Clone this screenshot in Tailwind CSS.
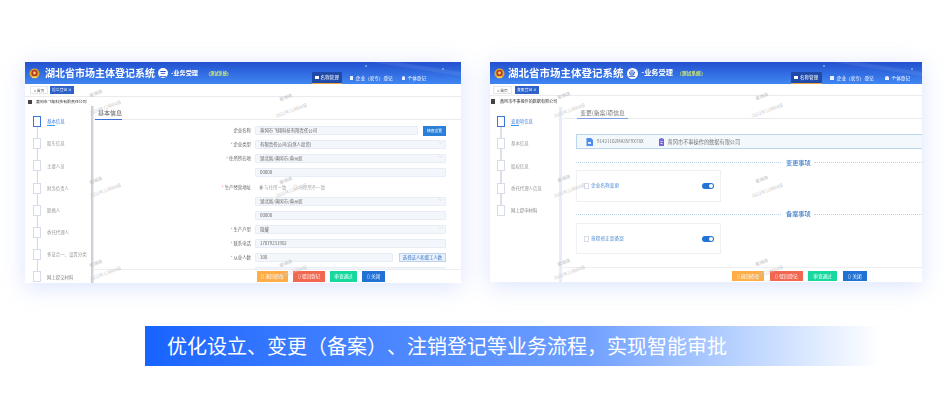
<!DOCTYPE html>
<html lang="en">

<head>
    <meta charset="UTF-8">
    <title>市场主体登记系统</title>
    <script src="https://cdn.jsdelivr.net/npm/@tailwindcss/browser@4"></script>
</head>

<body class="bg-white w-[950px] h-[420px] overflow-hidden [text-spacing-trim:space-all] font-['Noto_Sans_CJK_SC','Liberation_Sans',sans-serif]">
    <div class="flex pt-[62px] pl-[25px] gap-[29px] items-start">

        <!-- Left window Start -->
        <div class="relative w-[436px] h-[221px] bg-white overflow-hidden shadow-[0_4px_22px_rgba(90,130,250,0.22)]">
            <div class="flex flex-col h-full blur-[0.45px]">
                <!-- Header -->
                <header class="relative h-[22px] shrink-0 flex items-center bg-gradient-to-b from-[#2450cf] to-[#4186f2] text-white overflow-hidden">
                    <svg class="absolute right-0 top-0" width="130" height="22" viewBox="0 0 130 22">
                        <path d="M40 0 L130 14 L130 10 L66 0 Z" fill="#ffffff" opacity="0.08" />
                        <circle cx="35" cy="4" r="0.8" fill="#cfe0ff" />
                        <circle cx="112" cy="7" r="0.8" fill="#cfe0ff" />
                    </svg>
                    <svg class="ml-[4px] shrink-0" width="11" height="11" viewBox="0 0 11 11">
                        <circle cx="5.5" cy="5.5" r="5" fill="#e0a92c" />
                        <circle cx="5.5" cy="5" r="3.2" fill="#b23a2a" />
                        <circle cx="5.5" cy="5" r="1.4" fill="#f4d35e" />
                        <rect x="3" y="8.6" width="5" height="1.4" fill="#f4d35e" />
                    </svg>
                    <span class="ml-[5px] text-[10px] leading-none font-bold whitespace-nowrap">湖北省市场主体登记系统</span>
                    <span class="ml-[3px] w-[10px] h-[10px] rounded-full bg-white text-[#2450cf] text-[7px] leading-[10px] text-center font-bold">三</span>
                    <span class="ml-[3px] text-[6.2px] leading-none font-bold whitespace-nowrap">-业务受理</span>
                    <span class="ml-[8px] text-[4.2px] leading-none font-bold text-[#d8f06a] whitespace-nowrap">（测试系统）</span>
                    <div class="relative ml-auto pr-[35px] h-full flex items-end">
                        <div class="w-[30px] h-[12px] flex items-center justify-center gap-[1.5px] bg-[#1f4aa8] border-b border-[#e8a33d] text-[4.6px] rounded-t-[1px]">
                            <span class="w-[4px] h-[3px] bg-white"></span><span>名称管理</span>
                        </div>
                        <div class="h-[12px] ml-[8px] flex items-center gap-[3px] text-[4.6px] whitespace-nowrap">
                            <span class="w-[3px] h-[4px] bg-[#e8f0ff]"></span><span>企业（农专）登记</span>
                        </div>
                        <div class="h-[12px] ml-[9px] flex items-center gap-[3px] text-[4.6px] whitespace-nowrap">
                            <span class="w-[3px] h-[4px] bg-[#e8f0ff] rounded-t-full"></span><span>个体登记</span>
                        </div>
                    </div>
                </header>
                <!-- Toolbar -->
                <div class="h-[13px] shrink-0 flex items-center gap-[2px] pl-[5px] border-b border-[#e9ebef]">
                    <span class="w-[18px] h-[8px] border border-[#e5e7eb] text-[3.8px] leading-[7px] text-center text-[#555]">⌂ 首页</span>
                    <span class="w-[24px] h-[8px] bg-[#2c62c9] text-white text-[3.8px] leading-[8px] text-center">设立登记 ×</span>
                </div>
                <!-- Company -->
                <div class="h-[9px] shrink-0 flex items-center pl-[3px] gap-[4px] text-[3.9px] text-[#333] whitespace-nowrap">
                    <span class="w-[4px] h-[4px] bg-[#444]"></span><span>黄冈市飞翔科技有限责任公司</span>
                </div>
                <div class="flex flex-1 min-h-0">
                    <!-- Steps -->
                    <aside class="w-[66px] shrink-0 pt-[10px] pl-[8px]">
                        <div class="flex items-center gap-[6px] text-[#3f7fe0] text-[4.4px] leading-none relative"><span class="w-[8px] h-[11px] border-[1.5px] border-[#3b76e0] bg-white shrink-0"></span><span>基本信息</span><span class="absolute left-[14px] top-[9px] w-[8px] h-px bg-[#3b9bf0]"></span></div>
                        <div class="ml-[3.5px] w-px h-[11.2px] bg-[#d5d7dc]"></div>
                        <div class="flex items-center gap-[6px] text-[#999] text-[4.4px] leading-none"><span class="w-[8px] h-[11px] border-[1.5px] border-[#d7dcea] bg-white shrink-0"></span><span>股东信息</span></div>
                        <div class="ml-[3.5px] w-px h-[11.2px] bg-[#d5d7dc]"></div>
                        <div class="flex items-center gap-[6px] text-[#999] text-[4.4px] leading-none"><span class="w-[8px] h-[11px] border-[1.5px] border-[#d7dcea] bg-white shrink-0"></span><span>主要人员</span></div>
                        <div class="ml-[3.5px] w-px h-[11.2px] bg-[#d5d7dc]"></div>
                        <div class="flex items-center gap-[6px] text-[#999] text-[4.4px] leading-none"><span class="w-[8px] h-[11px] border-[1.5px] border-[#d7dcea] bg-white shrink-0"></span><span>财务负责人</span></div>
                        <div class="ml-[3.5px] w-px h-[11.2px] bg-[#d5d7dc]"></div>
                        <div class="flex items-center gap-[6px] text-[#999] text-[4.4px] leading-none"><span class="w-[8px] h-[11px] border-[1.5px] border-[#d7dcea] bg-white shrink-0"></span><span>联络人</span></div>
                        <div class="ml-[3.5px] w-px h-[11.2px] bg-[#d5d7dc]"></div>
                        <div class="flex items-center gap-[6px] text-[#999] text-[4.4px] leading-none"><span class="w-[8px] h-[11px] border-[1.5px] border-[#d7dcea] bg-white shrink-0"></span><span>委托代理人</span></div>
                        <div class="ml-[3.5px] w-px h-[11.2px] bg-[#d5d7dc]"></div>
                        <div class="flex items-center gap-[6px] text-[#999] text-[4.4px] leading-none whitespace-nowrap"><span class="w-[8px] h-[11px] border-[1.5px] border-[#d7dcea] bg-white shrink-0"></span><span>多证合一、设置分类</span></div>
                        <div class="ml-[3.5px] w-px h-[11.2px] bg-[#d5d7dc]"></div>
                        <div class="flex items-center gap-[6px] text-[#888] text-[4.4px] leading-none"><span class="w-[8px] h-[11px] border-[1.5px] border-[#d7dcea] bg-white shrink-0"></span><span>网上提交材料</span></div>
                    </aside>
                    <div class="w-[3px] shrink-0 bg-gradient-to-r from-[#c3c6cd] via-[#d4d7de] to-[#eef1fa]"></div>
                    <!-- Main -->
                    <main class="flex-1 min-w-0 flex flex-col">
                        <div class="h-[14px] shrink-0 flex border-b border-[#e9ebef] pl-px">
                            <span class="h-[14px] w-[27px] pl-[3px] text-[6px] leading-[14px] text-[#555] whitespace-nowrap border-b border-[#3b6fd8]">基本信息</span>
                        </div>
                        <div class="flex-1 min-h-0 overflow-hidden pt-[6px] flex flex-col gap-[5px] text-[4.4px] text-[#666]">
                            <div class="h-[9px] shrink-0 flex items-center"><span class="w-[158px] text-right pr-[1px]">企业名称</span><span class="ml-[3px] w-[163px] h-[9px] rounded-[1px] bg-[#f3f6fb] border border-[#e7edf6] pl-[4px] leading-[7px]">黄冈市飞翔科技有限责任公司</span><span class="ml-[5px] w-[23px] h-[10px] bg-[#2a80d8] text-white text-center leading-[10px] text-[3.8px]">核查重置</span></div>
                            <div class="h-[9px] shrink-0 flex items-center"><span class="w-[158px] text-right pr-[1px]"><span class="text-[#f08080]">* </span>企业类型</span><span class="ml-[3px] w-[191px] h-[9px] rounded-[1px] bg-[#f3f6fb] border border-[#e7edf6] pl-[4px] pr-[2px] leading-[7px] flex justify-between"><span>有限责任公司(自然人投资)</span><span class="text-[#c5ccd8]">﹀</span></span></div>
                            <div class="h-[9px] shrink-0 flex items-center"><span class="w-[158px] text-right pr-[1px]"><span class="text-[#f08080]">* </span>住所所在地</span><span class="ml-[3px] w-[191px] h-[9px] rounded-[1px] bg-[#f3f6fb] border border-[#e7edf6] pl-[4px] pr-[2px] leading-[7px] flex justify-between"><span>湖北省/黄冈市/黄州区</span><span class="text-[#c5ccd8]">﹀</span></span></div>
                            <div class="h-[9px] shrink-0 flex items-center"><span class="w-[158px]"></span><span class="ml-[3px] w-[191px] h-[9px] rounded-[1px] bg-[#f3f6fb] border border-[#e7edf6] pl-[4px] leading-[7px]">00000</span></div>
                            <div class="h-[10px] shrink-0 flex items-center"><span class="w-[158px] text-right pr-[1px]"><span class="text-[#f08080]">* </span>生产经营地址</span><span class="ml-[7px] text-[#aaa] whitespace-nowrap">◉ 与住所一致</span><span class="ml-[7px] text-[#aaa] whitespace-nowrap">○ 与住所不一致</span></div>
                            <div class="h-[9px] shrink-0 flex items-center"><span class="w-[158px]"></span><span class="ml-[3px] w-[191px] h-[9px] rounded-[1px] bg-[#f3f6fb] border border-[#e7edf6] pl-[4px] pr-[2px] leading-[7px] flex justify-between"><span>湖北省/黄冈市/黄州区</span><span class="text-[#c5ccd8]">﹀</span></span></div>
                            <div class="h-[9px] shrink-0 flex items-center"><span class="w-[158px]"></span><span class="ml-[3px] w-[191px] h-[9px] rounded-[1px] bg-[#f3f6fb] border border-[#e7edf6] pl-[4px] leading-[7px]">00000</span></div>
                            <div class="h-[9px] shrink-0 flex items-center"><span class="w-[158px] text-right pr-[1px]"><span class="text-[#f08080]">* </span>生产户型</span><span class="ml-[3px] w-[191px] h-[9px] rounded-[1px] bg-[#f3f6fb] border border-[#e7edf6] pl-[4px] pr-[2px] leading-[7px] flex justify-between"><span>隐藏</span><span class="text-[#c5ccd8]">﹀</span></span></div>
                            <div class="h-[9px] shrink-0 flex items-center"><span class="w-[158px] text-right pr-[1px]"><span class="text-[#f08080]">* </span>联系电话</span><span class="ml-[3px] w-[191px] h-[9px] rounded-[1px] bg-[#f3f6fb] border border-[#e7edf6] pl-[4px] leading-[7px]">17879231902</span></div>
                            <div class="h-[9px] shrink-0 flex items-center"><span class="w-[158px] text-right pr-[1px]"><span class="text-[#f08080]">* </span>从业人数</span><span class="ml-[3px] w-[138px] h-[9px] rounded-[1px] bg-[#f3f6fb] border border-[#e7edf6] pl-[4px] leading-[7px]">300</span><span class="ml-[6px] w-[47px] h-[9px] bg-[#e8f1fc] border border-[#bcd3f0] text-[#3b72c4] text-center leading-[7px] whitespace-nowrap">选择法人和董工人数</span></div>
                            <div class="h-[9px] shrink-0 flex items-center"><span class="w-[158px]"></span><span class="ml-[3px] w-[191px] h-[9px] rounded-[1px] bg-[#f3f6fb] border border-[#e7edf6]"></span></div>
                        </div>
                        <!-- Footer buttons -->
                        <div class="h-[14px] shrink-0 border-t border-[#eceef2] pl-[163px] pt-[1px] flex gap-[5px] text-white text-[4.6px] leading-[11px] text-center">
                            <span class="w-[31px] h-[11px] bg-[#ffad47]">▯ 退回修改</span>
                            <span class="w-[32px] h-[11px] bg-[#f2674f]">▯ 驳回登记</span>
                            <span class="w-[27px] h-[11px] bg-[#17d9a0]">审查通过</span>
                            <span class="w-[23px] h-[11px] bg-[#2272d6]">▯ 关闭</span>
                        </div>
                    </main>
                </div>
            </div>
            <!-- Watermarks -->
            <div class="absolute left-[64px] top-[29px] -rotate-[20deg] text-[4.4px] leading-none text-[#bdbdbd] whitespace-nowrap">曾琪琪</div>
            <div class="absolute left-[64px] top-[43px] -rotate-[20deg] text-[4.4px] leading-none text-[#c8c8c8] whitespace-nowrap">2022年12月04日</div>
            <div class="absolute left-[64px] top-[116px] -rotate-[20deg] text-[4.4px] leading-none text-[#bdbdbd] whitespace-nowrap">曾琪琪</div>
            <div class="absolute left-[64px] top-[126px] -rotate-[20deg] text-[4.4px] leading-none text-[#c8c8c8] whitespace-nowrap">2022年12月04日</div>
            <div class="absolute left-[64px] top-[199px] -rotate-[20deg] text-[4.4px] leading-none text-[#bdbdbd] whitespace-nowrap">曾琪琪</div>
            <div class="absolute left-[64px] top-[209px] -rotate-[20deg] text-[4.4px] leading-none text-[#c8c8c8] whitespace-nowrap">2022年12月04日</div>
            <div class="absolute left-[254px] top-[33px] -rotate-[20deg] text-[4.4px] leading-none text-[#bdbdbd] whitespace-nowrap">曾琪琪</div>
            <div class="absolute left-[250px] top-[46px] -rotate-[20deg] text-[4.4px] leading-none text-[#c8c8c8] whitespace-nowrap">2022年12月04日</div>
            <div class="absolute left-[254px] top-[116px] -rotate-[20deg] text-[4.4px] leading-none text-[#bdbdbd] whitespace-nowrap">曾琪琪</div>
            <div class="absolute left-[250px] top-[126px] -rotate-[20deg] text-[4.4px] leading-none text-[#c8c8c8] whitespace-nowrap">2022年12月04日</div>
            <div class="absolute left-[254px] top-[199px] -rotate-[20deg] text-[4.4px] leading-none text-[#bdbdbd] whitespace-nowrap">曾琪琪</div>
            <div class="absolute left-[250px] top-[208px] -rotate-[20deg] text-[4.4px] leading-none text-[#c8c8c8] whitespace-nowrap">2022年12月04日</div>
        </div>
        <!-- Left window End -->

        <!-- Right window Start -->
        <div class="relative w-[432px] h-[220px] bg-white overflow-hidden shadow-[0_4px_22px_rgba(90,130,250,0.22)]">
            <div class="flex flex-col h-full blur-[0.45px]">
                <!-- Header -->
                <header class="relative h-[22px] shrink-0 flex items-center bg-gradient-to-b from-[#2450cf] to-[#4186f2] text-white overflow-hidden">
                    <svg class="absolute right-0 top-0" width="130" height="22" viewBox="0 0 130 22">
                        <path d="M40 0 L130 14 L130 10 L66 0 Z" fill="#ffffff" opacity="0.08" />
                        <circle cx="32" cy="4" r="0.8" fill="#cfe0ff" />
                        <circle cx="120" cy="7" r="0.8" fill="#cfe0ff" />
                    </svg>
                    <svg class="ml-[4px] shrink-0" width="11" height="11" viewBox="0 0 11 11">
                        <circle cx="5.5" cy="5.5" r="5" fill="#e0a92c" />
                        <circle cx="5.5" cy="5" r="3.2" fill="#b23a2a" />
                        <circle cx="5.5" cy="5" r="1.4" fill="#f4d35e" />
                        <rect x="3" y="8.6" width="5" height="1.4" fill="#f4d35e" />
                    </svg>
                    <span class="ml-[3px] text-[10.5px] leading-none font-bold whitespace-nowrap">湖北省市场主体登记系统</span>
                    <span class="ml-[3px] w-[11px] h-[11px] rounded-full bg-white text-[#2450cf] text-[7px] leading-[11px] text-center font-bold">业</span>
                    <span class="ml-[4px] text-[7.2px] leading-none font-bold whitespace-nowrap">-业务受理</span>
                    <span class="ml-[4px] text-[4.8px] leading-none font-bold text-[#d8f06a] whitespace-nowrap">（测试系统）</span>
                    <div class="relative ml-auto pr-[12px] h-full flex items-end">
                        <div class="w-[31px] h-[12px] flex items-center justify-center gap-[1.5px] bg-[#1f4aa8] border-b border-[#e8a33d] text-[4.6px] rounded-t-[1px]">
                            <span class="w-[4px] h-[3px] bg-white"></span><span>名称管理</span>
                        </div>
                        <div class="h-[12px] ml-[8px] flex items-center gap-[3px] text-[4.6px] whitespace-nowrap">
                            <span class="w-[4px] h-[4px] bg-[#e8f0ff]"></span><span>企业（农专）登记</span>
                        </div>
                        <div class="h-[12px] ml-[11px] flex items-center gap-[3px] text-[4.6px] whitespace-nowrap">
                            <span class="w-[4px] h-[4px] bg-[#e8f0ff] rounded-t-full"></span><span>个体登记</span>
                        </div>
                    </div>
                </header>
                <!-- Toolbar -->
                <div class="h-[12px] shrink-0 flex items-center gap-[3px] pl-[3px] border-b border-[#e9ebef]">
                    <span class="w-[19px] h-[8px] border border-[#e5e7eb] text-[3.8px] leading-[7px] text-center text-[#555]">⌂ 首页</span>
                    <span class="w-[24px] h-[8px] bg-[#2c62c9] text-white text-[3.8px] leading-[8px] text-center">变更登记 ×</span>
                </div>
                <!-- Company -->
                <div class="h-[11px] shrink-0 flex items-center pl-[1px] gap-[5px] text-[4.1px] text-[#333] whitespace-nowrap">
                    <span class="w-[4px] h-[5px] bg-[#444]"></span><span>黄冈市不事操作的数据有限公司</span>
                </div>
                <div class="flex flex-1 min-h-0">
                    <!-- Steps -->
                    <aside class="w-[69px] shrink-0 pt-[9px] pl-[7px]">
                        <div class="flex items-center gap-[6px] text-[#3f7fe0] text-[4.4px] leading-none relative"><span class="w-[8px] h-[11px] border-[1.5px] border-[#3b76e0] bg-white shrink-0"></span><span>变更项信息</span><span class="absolute left-[14px] top-[9px] w-[8px] h-px bg-[#3b9bf0]"></span></div>
                        <div class="ml-[3px] w-[1.5px] h-[11.2px] bg-[#dde0e6]"></div>
                        <div class="flex items-center gap-[6px] text-[#999] text-[4.4px] leading-none"><span class="w-[8px] h-[11px] border-[1.5px] border-[#d7dcea] bg-white shrink-0"></span><span>基本信息</span></div>
                        <div class="ml-[3px] w-[1.5px] h-[11.2px] bg-[#dde0e6]"></div>
                        <div class="flex items-center gap-[6px] text-[#999] text-[4.4px] leading-none"><span class="w-[8px] h-[11px] border-[1.5px] border-[#d7dcea] bg-white shrink-0"></span><span>股权信息</span></div>
                        <div class="ml-[3px] w-[1.5px] h-[11.2px] bg-[#dde0e6]"></div>
                        <div class="flex items-center gap-[6px] text-[#999] text-[4.4px] leading-none"><span class="w-[8px] h-[11px] border-[1.5px] border-[#d7dcea] bg-white shrink-0"></span><span>委托代理人信息</span></div>
                        <div class="ml-[3px] w-[1.5px] h-[11.2px] bg-[#dde0e6]"></div>
                        <div class="flex items-center gap-[6px] text-[#888] text-[4.4px] leading-none"><span class="w-[8px] h-[11px] border-[1.5px] border-[#d7dcea] bg-white shrink-0"></span><span>网上提申材料</span></div>
                    </aside>
                    <div class="w-[3px] shrink-0 bg-[#e8ecf8]"></div>
                    <!-- Main -->
                    <main class="flex-1 min-w-0 flex flex-col">
                        <div class="h-[12px] shrink-0 flex border-b border-[#e9ebef] pl-[15px]">
                            <span class="h-[12px] w-[51px] text-[5.8px] leading-[11px] text-[#777] border-b border-[#7f9fe0] text-center whitespace-nowrap">变更(备案)项信息</span>
                        </div>
                        <div class="flex-1 min-h-0 overflow-hidden pl-[14px]">
                            <div class="mt-[15px] h-[15px] flex items-center bg-[#f3f8fd] border-y border-l border-[#bcd5ee] text-[4.5px] text-[#777] whitespace-nowrap">
                                <svg class="ml-[9px]" width="7" height="8" viewBox="0 0 7 8"><path d="M0.5 0 H5 L7 2 V8 H0.5 Z" fill="#4c8cec" /><rect x="2" y="4" width="3" height="2" fill="#d6e6fb" /></svg>
                                <span class="ml-[4px]">91421102MA35F9XT8X</span>
                                <svg class="ml-[14px]" width="7" height="8" viewBox="0 0 7 8"><path d="M1 1 L3.5 0 L6 1 V8 H1 Z" fill="#7a62d8" /><rect x="2.5" y="3" width="2" height="1" fill="#e4defa" /><rect x="2.5" y="5" width="2" height="1" fill="#e4defa" /></svg>
                                <span class="ml-[3px] text-[5.2px]">黄冈市不事操作的数据有限公司</span>
                            </div>
                            <div class="mt-[8px] h-[11px] flex items-center text-[#3f7fc8] text-[6.2px] font-medium">
                                <span class="w-[205px] border-t border-dotted border-[#bcd5ee]"></span><span class="ml-[5px]">变更事项</span><span class="flex-1 ml-[3px] border-t border-dotted border-[#bcd5ee]"></span>
                            </div>
                            <div class="mt-[2px] w-[145px] h-[32px] border border-[#eef0f3] flex items-center pl-[7px] pr-[6px] text-[4.7px] text-[#4a8ad4]">
                                <span class="w-[5px] h-[6px] border border-[#d5dbe8]"></span><span class="ml-[2px]">企业名称变更</span>
                                <span class="ml-auto w-[12px] h-[6px] rounded-full bg-[#2272d6] flex justify-end items-center pr-px"><span class="w-[4px] h-[4px] rounded-full bg-white"></span></span>
                            </div>
                            <div class="mt-[7px] h-[10px] flex items-center text-[#3f7fc8] text-[6.2px] font-medium">
                                <span class="w-[205px] border-t border-dotted border-[#bcd5ee]"></span><span class="ml-[5px]">备案事项</span><span class="flex-1 ml-[3px] border-t border-dotted border-[#bcd5ee]"></span>
                            </div>
                            <div class="mt-[4px] w-[145px] h-[31px] border border-[#eef0f3] flex items-center pl-[7px] pr-[6px] text-[4.7px] text-[#4a8ad4]">
                                <span class="w-[5px] h-[6px] border border-[#d5dbe8]"></span><span class="ml-[2px]">章程修正案备案</span>
                                <span class="ml-auto w-[12px] h-[6px] rounded-full bg-[#2272d6] flex justify-end items-center pr-px"><span class="w-[4px] h-[4px] rounded-full bg-white"></span></span>
                            </div>
                        </div>
                        <!-- Footer buttons -->
                        <div class="h-[15px] shrink-0 border-t border-[#eceef2] pl-[170px] pt-[3px] flex text-white text-[4.6px] leading-[10px] text-center">
                            <span class="w-[32px] h-[10px] bg-[#ffad47]">▯ 退回修改</span>
                            <span class="ml-[6px] w-[33px] h-[10px] bg-[#f2674f]">▯ 驳回登记</span>
                            <span class="ml-[5px] w-[29px] h-[10px] bg-[#17d9a0]">审查通过</span>
                            <span class="ml-[6px] w-[24px] h-[10px] bg-[#2272d6]">▯ 关闭</span>
                        </div>
                    </main>
                </div>
            </div>
            <!-- Watermarks -->
            <div class="absolute left-[67px] top-[31px] -rotate-[20deg] text-[4.4px] leading-none text-[#bdbdbd] whitespace-nowrap">曾琪琪</div>
            <div class="absolute left-[63px] top-[46px] -rotate-[20deg] text-[4.4px] leading-none text-[#c8c8c8] whitespace-nowrap">2022年12月04日</div>
            <div class="absolute left-[67px] top-[114px] -rotate-[20deg] text-[4.4px] leading-none text-[#bdbdbd] whitespace-nowrap">曾琪琪</div>
            <div class="absolute left-[63px] top-[126px] -rotate-[20deg] text-[4.4px] leading-none text-[#c8c8c8] whitespace-nowrap">2022年12月04日</div>
            <div class="absolute left-[67px] top-[198px] -rotate-[20deg] text-[4.4px] leading-none text-[#bdbdbd] whitespace-nowrap">曾琪琪</div>
            <div class="absolute left-[63px] top-[208px] -rotate-[20deg] text-[4.4px] leading-none text-[#c8c8c8] whitespace-nowrap">2022年12月04日</div>
            <div class="absolute left-[265px] top-[32px] -rotate-[20deg] text-[4.4px] leading-none text-[#bdbdbd] whitespace-nowrap">曾琪琪</div>
            <div class="absolute left-[261px] top-[46px] -rotate-[20deg] text-[4.4px] leading-none text-[#c8c8c8] whitespace-nowrap">2022年12月04日</div>
            <div class="absolute left-[265px] top-[115px] -rotate-[20deg] text-[4.4px] leading-none text-[#bdbdbd] whitespace-nowrap">曾琪琪</div>
            <div class="absolute left-[261px] top-[126px] -rotate-[20deg] text-[4.4px] leading-none text-[#c8c8c8] whitespace-nowrap">2022年12月04日</div>
            <div class="absolute left-[265px] top-[198px] -rotate-[20deg] text-[4.4px] leading-none text-[#bdbdbd] whitespace-nowrap">曾琪琪</div>
            <div class="absolute left-[261px] top-[208px] -rotate-[20deg] text-[4.4px] leading-none text-[#c8c8c8] whitespace-nowrap">2022年12月04日</div>
        </div>
        <!-- Right window End -->
    </div>

    <!-- Caption banner -->
    <div class="mt-[43px] ml-[145px] w-[735px] h-[40px] pl-[22px] flex items-center bg-gradient-to-r from-[#1763ff] via-[#6f9fff] via-60% to-white text-white text-[20px] whitespace-nowrap">
        优化设立、变更（备案）、注销登记等业务流程，实现智能审批
    </div>
</body>

</html>
